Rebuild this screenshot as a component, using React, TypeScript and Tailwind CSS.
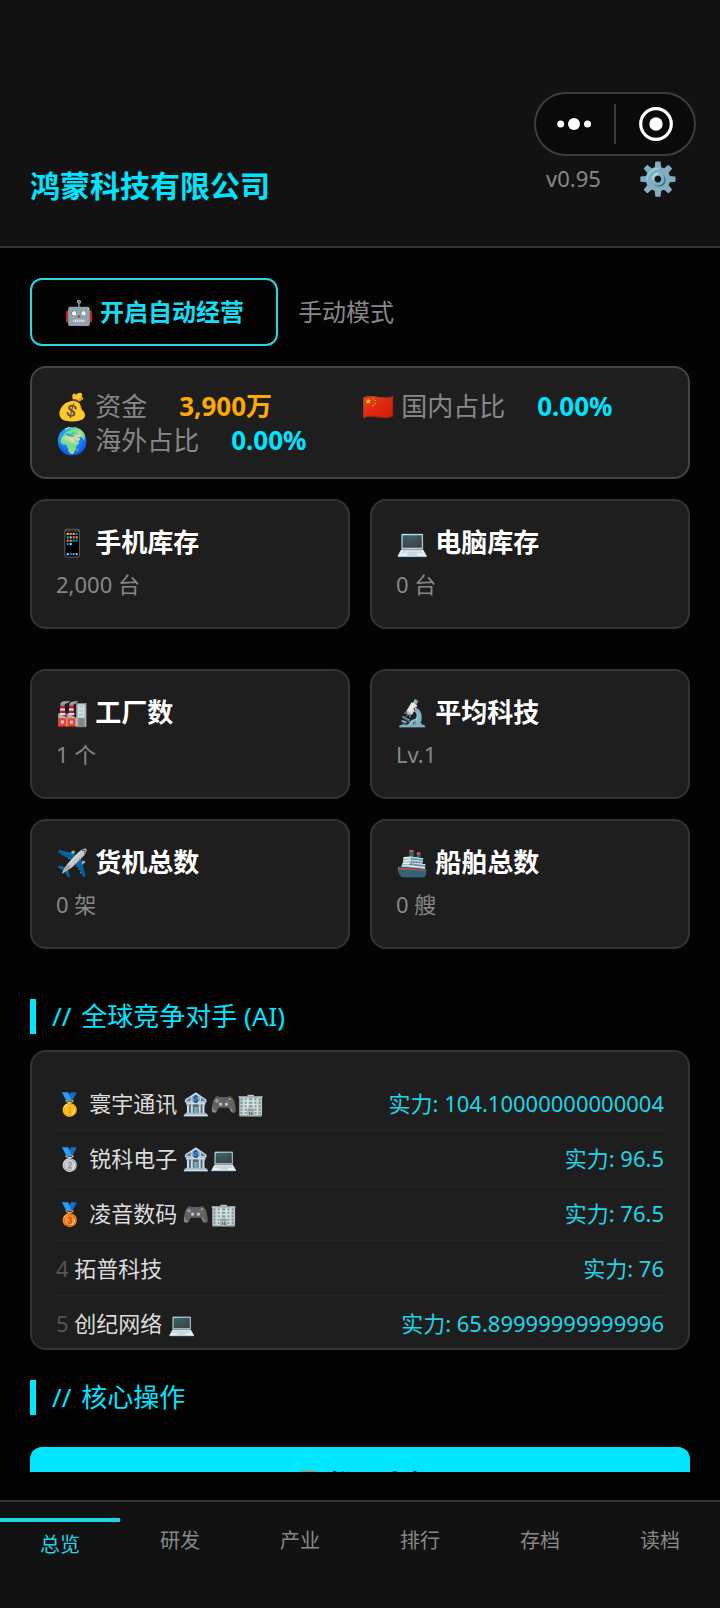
import React from "react";

type Stat = { icon: string; title: string; value: string };

const stock: Stat[] = [
  { icon: "📱", title: "手机库存", value: "2,000 台" },
  { icon: "💻", title: "电脑库存", value: "0 台" },
];

const assets: Stat[] = [
  { icon: "🏭", title: "工厂数", value: "1 个" },
  { icon: "🔬", title: "平均科技", value: "Lv.1" },
  { icon: "✈️", title: "货机总数", value: "0 架" },
  { icon: "🚢", title: "船舶总数", value: "0 艘" },
];

const rivals = [
  { rank: "🥇", name: "寰宇通讯 🏦🎮🏢", power: "104.10000000000004" },
  { rank: "🥈", name: "锐科电子 🏦💻", power: "96.5" },
  { rank: "🥉", name: "凌音数码 🎮🏢", power: "76.5" },
  { rank: "4", name: "拓普科技", power: "76" },
  { rank: "5", name: "创纪网络 💻", power: "65.89999999999996" },
];

const tabs = ["总览", "研发", "产业", "排行", "存档", "读档"];

function StatCard({ icon, title, value }: Stat) {
  return (
    <div className="h-[130px] rounded-2xl border-2 border-[#333] bg-[#1e1e1e] px-6 pt-6">
      <h3 className="text-[26px] leading-[34px] font-bold text-white">
        {icon} {title}
      </h3>
      <p className="mt-2.5 text-[22px] leading-[30px] text-[#888]">{value}</p>
    </div>
  );
}

function SectionTitle({ children }: { children: React.ReactNode }) {
  return (
    <h2 className="flex gap-2.5 border-l-6 border-[#00e5ff] pl-4 text-[26px] leading-[35px] text-[#00e5ff]">
      <span>//</span>
      <span>{children}</span>
    </h2>
  );
}

function Metric({ label, value, tone }: { label: string; value: string; tone: string }) {
  return (
    <div className="flex gap-8">
      <span className="text-[#888]">{label}</span>
      <span className={`font-bold ${tone}`}>{value}</span>
    </div>
  );
}

export default function App() {
  return (
    <div className="flex h-screen flex-col overflow-hidden bg-[#030303] font-['Noto_Sans','Noto_Sans_CJK_SC','Noto_Color_Emoji',sans-serif]">
      <header className="flex h-[248px] shrink-0 items-start justify-between border-b-2 border-[#333] bg-[#121212] pl-[30px] pr-6 pt-[92px]">
        <h1 className="pt-[72px] text-[30px] leading-11 font-bold text-[#00e5ff]">鸿蒙科技有限公司</h1>
        <div className="w-[162px]">
          <div className="flex h-16 items-center rounded-full border-2 border-[#3d3d3d] bg-[#0a0a0a]">
            <button type="button" aria-label="更多" className="flex flex-1 justify-center">
              <svg className="h-3 w-9" viewBox="0 0 36 12" fill="white">
                <circle cx="3.7" cy="6" r="3.5" />
                <circle cx="17" cy="6" r="6" />
                <circle cx="30.5" cy="6" r="3.5" />
              </svg>
            </button>
            <div className="h-10 w-0.5 bg-[#3d3d3d]" />
            <button type="button" aria-label="关闭" className="flex flex-1 justify-center">
              <svg className="size-9" viewBox="0 0 36 36">
                <circle cx="19" cy="18" r="15.3" fill="none" stroke="white" strokeWidth="3.2" />
                <circle cx="19" cy="18" r="6.7" fill="white" />
              </svg>
            </button>
          </div>
          <div className="flex items-center justify-between pl-3 pr-[18px]">
            <span className="text-[22px] leading-[42px] text-[#888]">v0.95</span>
            <button type="button" aria-label="设置" className="text-[32px] leading-11">⚙️</button>
          </div>
        </div>
      </header>

      <main className="mb-7 min-h-0 flex-1 overflow-hidden px-[30px] pt-[30px]">
        <div className="flex items-center gap-5">
          <button
            type="button"
            className="h-[68px] rounded-xl border-2 border-[#26d7ea] px-8 text-2xl font-bold text-[#16dcf2]"
          >
            🤖 开启自动经营
          </button>
          <span className="text-2xl text-[#888]">手动模式</span>
        </div>

        <section className="mt-5 flex flex-wrap content-start gap-x-[90px] rounded-2xl border-2 border-[#444] bg-[#1e1e1e] px-6 pt-[21px] pb-5 text-[26px] leading-[34px]">
          <Metric label="💰 资金" value="3,900万" tone="text-[#ffaa00]" />
          <Metric label="🇨🇳 国内占比" value="0.00%" tone="text-[#00e5ff]" />
          <Metric label="🌍 海外占比" value="0.00%" tone="text-[#00e5ff]" />
        </section>

        <section className="mt-5 grid grid-cols-2 gap-5">
          {stock.map((s) => (
            <StatCard key={s.title} {...s} />
          ))}
        </section>
        <section className="mt-10 mb-[50px] grid grid-cols-2 gap-5">
          {assets.map((s) => (
            <StatCard key={s.title} {...s} />
          ))}
        </section>

        <SectionTitle>全球竞争对手 (AI)</SectionTitle>
        <ol className="mt-4 mb-[30px] h-[300px] overflow-hidden rounded-2xl border-2 border-[#333] bg-[#1e1e1e] px-6 pt-6 text-[22px] leading-[30px]">
          {rivals.map((r) => (
            <li key={r.name} className="flex justify-between border-b border-[#262626] py-3">
              <span className="text-[#ddd]">
                <span className="text-[#555]">{r.rank}</span> {r.name}
              </span>
              <span className="text-[#1fd5e8]">实力: {r.power}</span>
            </li>
          ))}
        </ol>

        <SectionTitle>核心操作</SectionTitle>
        <button
          type="button"
          className="mt-8 h-[72px] w-full rounded-xl bg-[#00e5ff] text-2xl font-bold text-black"
        >
          ⏳ 推进季度
        </button>
      </main>

      <nav className="flex h-[108px] shrink-0 items-start border-t-2 border-[#333] bg-[#121212] pt-4">
        {tabs.map((t, i) => (
          <button
            key={t}
            type="button"
            className={
              i === 0
                ? "flex-1 border-t-4 border-[#1fd5e8] pt-2 text-xl leading-[30px] text-[#1fd5e8]"
                : "flex-1 pt-2 text-xl leading-[30px] text-[#888]"
            }
          >
            {t}
          </button>
        ))}
      </nav>
    </div>
  );
}
